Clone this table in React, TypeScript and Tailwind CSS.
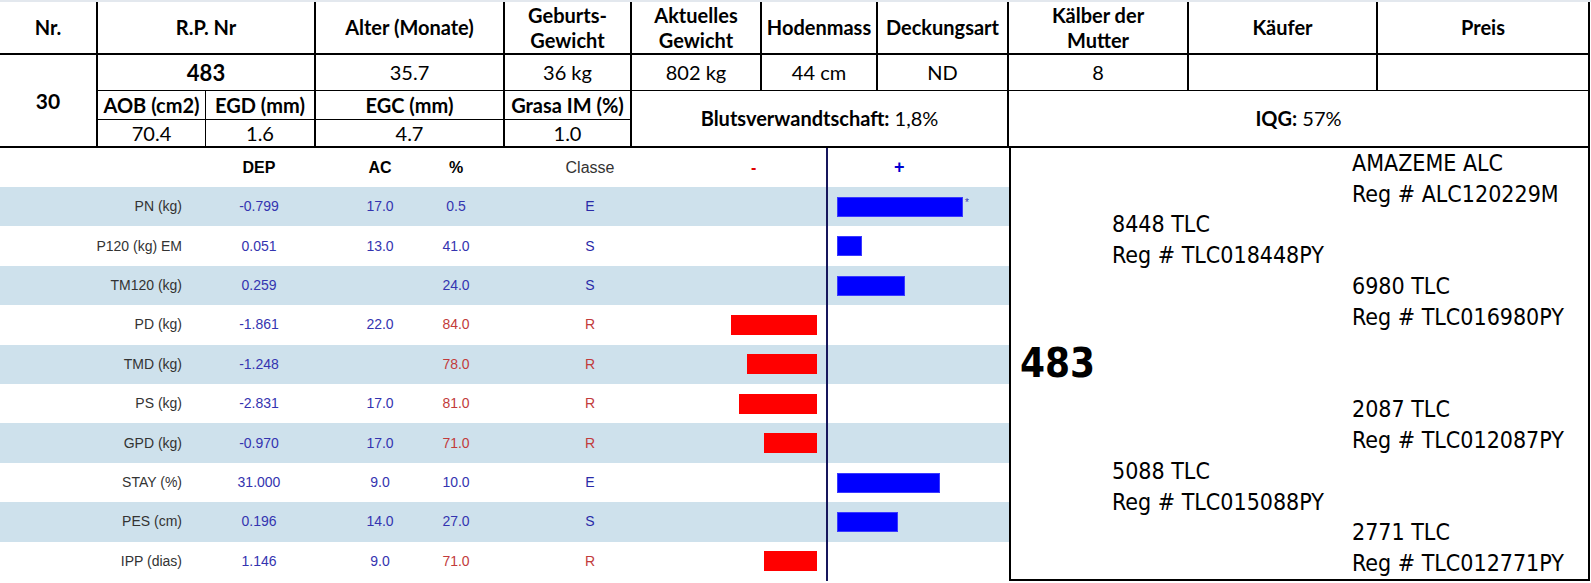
type Trait = {
  label: string
  dep: string
  ac: string
  pct: string
  cls: "E" | "S" | "R"
  neg?: number
  pos?: number
  star?: boolean
}

const traits: Trait[] = [
  { label: "PN (kg)", dep: "-0.799", ac: "17.0", pct: "0.5", cls: "E", pos: 126, star: true },
  { label: "P120 (kg) EM", dep: "0.051", ac: "13.0", pct: "41.0", cls: "S", pos: 25 },
  { label: "TM120 (kg)", dep: "0.259", ac: "", pct: "24.0", cls: "S", pos: 68 },
  { label: "PD (kg)", dep: "-1.861", ac: "22.0", pct: "84.0", cls: "R", neg: 86 },
  { label: "TMD (kg)", dep: "-1.248", ac: "", pct: "78.0", cls: "R", neg: 70 },
  { label: "PS (kg)", dep: "-2.831", ac: "17.0", pct: "81.0", cls: "R", neg: 78 },
  { label: "GPD (kg)", dep: "-0.970", ac: "17.0", pct: "71.0", cls: "R", neg: 53 },
  { label: "STAY (%)", dep: "31.000", ac: "9.0", pct: "10.0", cls: "E", pos: 103 },
  { label: "PES (cm)", dep: "0.196", ac: "14.0", pct: "27.0", cls: "S", pos: 61 },
  { label: "IPP (dias)", dep: "1.146", ac: "9.0", pct: "71.0", cls: "R", neg: 53 },
]

function InfoTable() {
  return (
    <div className="grid w-[1590px] grid-cols-[98px_108px_110px_189px_127px_130px_116px_131px_180px_189px_212px] grid-rows-[53px_36px_29px_28px] font-['Lato',sans-serif] text-[20px] leading-[25px] text-black">
      {/* header */}
      <div className="flex items-center justify-center border-r-2 border-b-2 border-black font-bold">Nr.</div>
      <div className="col-span-2 flex items-center justify-center border-r-2 border-b-2 border-black font-bold">R.P. Nr</div>
      <div className="flex items-center justify-center border-r-2 border-b-2 border-black font-bold">Alter (Monate)</div>
      <div className="flex items-center justify-center border-r-2 border-b-2 border-black text-center font-bold">
        Geburts-
        <br />
        Gewicht
      </div>
      <div className="flex items-center justify-center border-r-2 border-b-2 border-black text-center font-bold">
        Aktuelles
        <br />
        Gewicht
      </div>
      <div className="flex items-center justify-center border-r-2 border-b-2 border-black font-bold">Hodenmass</div>
      <div className="flex items-center justify-center border-r-2 border-b-2 border-black font-bold">Deckungsart</div>
      <div className="flex items-center justify-center border-r-2 border-b-2 border-black text-center font-bold">
        Kälber der
        <br />
        Mutter
      </div>
      <div className="flex items-center justify-center border-r-2 border-b-2 border-black font-bold">Käufer</div>
      <div className="flex items-center justify-center border-r-2 border-b-2 border-black font-bold">Preis</div>

      {/* first data row */}
      <div className="row-span-3 flex items-center justify-center border-r-2 border-b-2 border-black text-[21px] font-bold">30</div>
      <div className="col-span-2 flex items-center justify-center border-r-2 border-b border-black text-[22px] font-bold">483</div>
      <div className="flex items-center justify-center border-r-2 border-b border-black">35.7</div>
      <div className="flex items-center justify-center border-r-2 border-b border-black">36 kg</div>
      <div className="flex items-center justify-center border-r-2 border-b border-black">802 kg</div>
      <div className="flex items-center justify-center border-r-2 border-b border-black">44 cm</div>
      <div className="flex items-center justify-center border-r-2 border-b border-black">ND</div>
      <div className="flex items-center justify-center border-r-2 border-b border-black">8</div>
      <div className="border-r-2 border-b border-black"></div>
      <div className="border-r-2 border-b border-black"></div>

      {/* carcass labels */}
      <div className="flex items-center justify-center border-r border-b border-black font-bold">AOB (cm2)</div>
      <div className="flex items-center justify-center border-r-2 border-b border-black font-bold">EGD (mm)</div>
      <div className="flex items-center justify-center border-r-2 border-b border-black font-bold">EGC (mm)</div>
      <div className="flex items-center justify-center border-r-2 border-b border-black font-bold">Grasa IM (%)</div>
      <div className="col-span-3 row-span-2 flex items-center justify-center border-r-2 border-b-2 border-black">
        <span className="font-bold">Blutsverwandtschaft:</span>&nbsp;1,8%
      </div>
      <div className="col-span-3 row-span-2 flex items-center justify-center border-r-2 border-b-2 border-black">
        <span className="font-bold">IQG:</span>&nbsp;57%
      </div>

      {/* carcass values */}
      <div className="flex items-center justify-center border-r border-b-2 border-black">70.4</div>
      <div className="flex items-center justify-center border-r-2 border-b-2 border-black">1.6</div>
      <div className="flex items-center justify-center border-r-2 border-b-2 border-black">4.7</div>
      <div className="flex items-center justify-center border-r-2 border-b-2 border-black">1.0</div>
    </div>
  )
}

function EpdChart() {
  return (
    <div className="flex h-[433px] w-[1009px] flex-col font-['Liberation_Sans',Arial,sans-serif]">
      <div className="flex h-[39px] shrink-0 items-center text-[16px] text-black">
        <div className="w-[190px]"></div>
        <div className="w-[138px] text-center font-bold">DEP</div>
        <div className="w-[104px] text-center font-bold">AC</div>
        <div className="w-[48px] text-center font-bold">%</div>
        <div className="w-[220px] text-center text-[#333]">Classe</div>
        <div className="flex h-full w-[128px] items-center border-r-2 border-[#16165c] pl-[51px] font-bold text-[#e00000]">-</div>
        <div className="flex h-full flex-1 items-center pl-[66px] text-[18px] font-bold text-[#0000d0]">+</div>
      </div>

      {traits.map((t, i) => {
        const red = t.cls === "R"
        return (
          <div key={t.label} className={`flex flex-1 items-center text-[14px] ${i % 2 === 0 ? "bg-[#cee1ec]" : "bg-white"}`}>
            <div className="w-[190px] pr-[8px] text-right text-[#333]">{t.label}</div>
            <div className="w-[138px] text-center text-[#3434b0]">{t.dep}</div>
            <div className="w-[104px] text-center text-[#3434b0]">{t.ac}</div>
            <div className={`w-[48px] text-center ${red ? "text-[#c23b3b]" : "text-[#3434b0]"}`}>{t.pct}</div>
            <div className={`w-[220px] text-center ${red ? "text-[#c23b3b]" : "text-[#2a2aa8]"}`}>{t.cls}</div>
            <div className="flex h-full w-[128px] items-center justify-end border-r-2 border-[#16165c] pr-[9px]">
              {t.neg ? <div className="h-[20px] bg-[#ff0000]" style={{ width: t.neg }}></div> : null}
            </div>
            <div className="flex h-full flex-1 items-center pl-[9px]">
              {t.pos ? <div className="h-[20px] border border-[#3a3aff] bg-[#0000ff]" style={{ width: t.pos }}></div> : null}
              {t.star ? <span className="-mt-[8px] ml-[2px] text-[10px] text-[#3434b0]">*</span> : null}
            </div>
          </div>
        )
      })}
    </div>
  )
}

function Pedigree() {
  return (
    <div className="grid h-[433px] w-[581px] grid-cols-[101px_238px_1fr] grid-rows-[repeat(14,minmax(0,1fr))] border-x-2 border-b-2 border-black font-['DejaVu_Sans_Condensed','Liberation_Sans',sans-serif] text-[23px] leading-none text-black">
      <div className="col-start-3 row-start-1 flex items-center pl-[2px]">AMAZEME ALC</div>
      <div className="col-start-3 row-start-2 flex items-center pl-[2px]">Reg # ALC120229M</div>
      <div className="col-start-2 row-start-3 flex items-center">8448 TLC</div>
      <div className="col-start-2 row-start-4 flex items-center">Reg # TLC018448PY</div>
      <div className="col-start-3 row-start-5 flex items-center pl-[2px]">6980 TLC</div>
      <div className="col-start-3 row-start-6 flex items-center pl-[2px]">Reg # TLC016980PY</div>
      <div className="col-start-1 row-span-2 row-start-7 flex items-center pl-[9px] text-[40px] font-bold">483</div>
      <div className="col-start-3 row-start-9 flex items-center pl-[2px]">2087 TLC</div>
      <div className="col-start-3 row-start-10 flex items-center pl-[2px]">Reg # TLC012087PY</div>
      <div className="col-start-2 row-start-11 flex items-center">5088 TLC</div>
      <div className="col-start-2 row-start-12 flex items-center">Reg # TLC015088PY</div>
      <div className="col-start-3 row-start-13 flex items-center pl-[2px]">2771 TLC</div>
      <div className="col-start-3 row-start-14 flex items-center pl-[2px]">Reg # TLC012771PY</div>
    </div>
  )
}

export default function App() {
  return (
    <div className="h-[583px] w-[1591px] overflow-hidden bg-white">
      <div className="h-[2px] bg-[#e3e8ee]"></div>
      <InfoTable />
      <div className="flex">
        <EpdChart />
        <Pedigree />
      </div>
    </div>
  )
}
